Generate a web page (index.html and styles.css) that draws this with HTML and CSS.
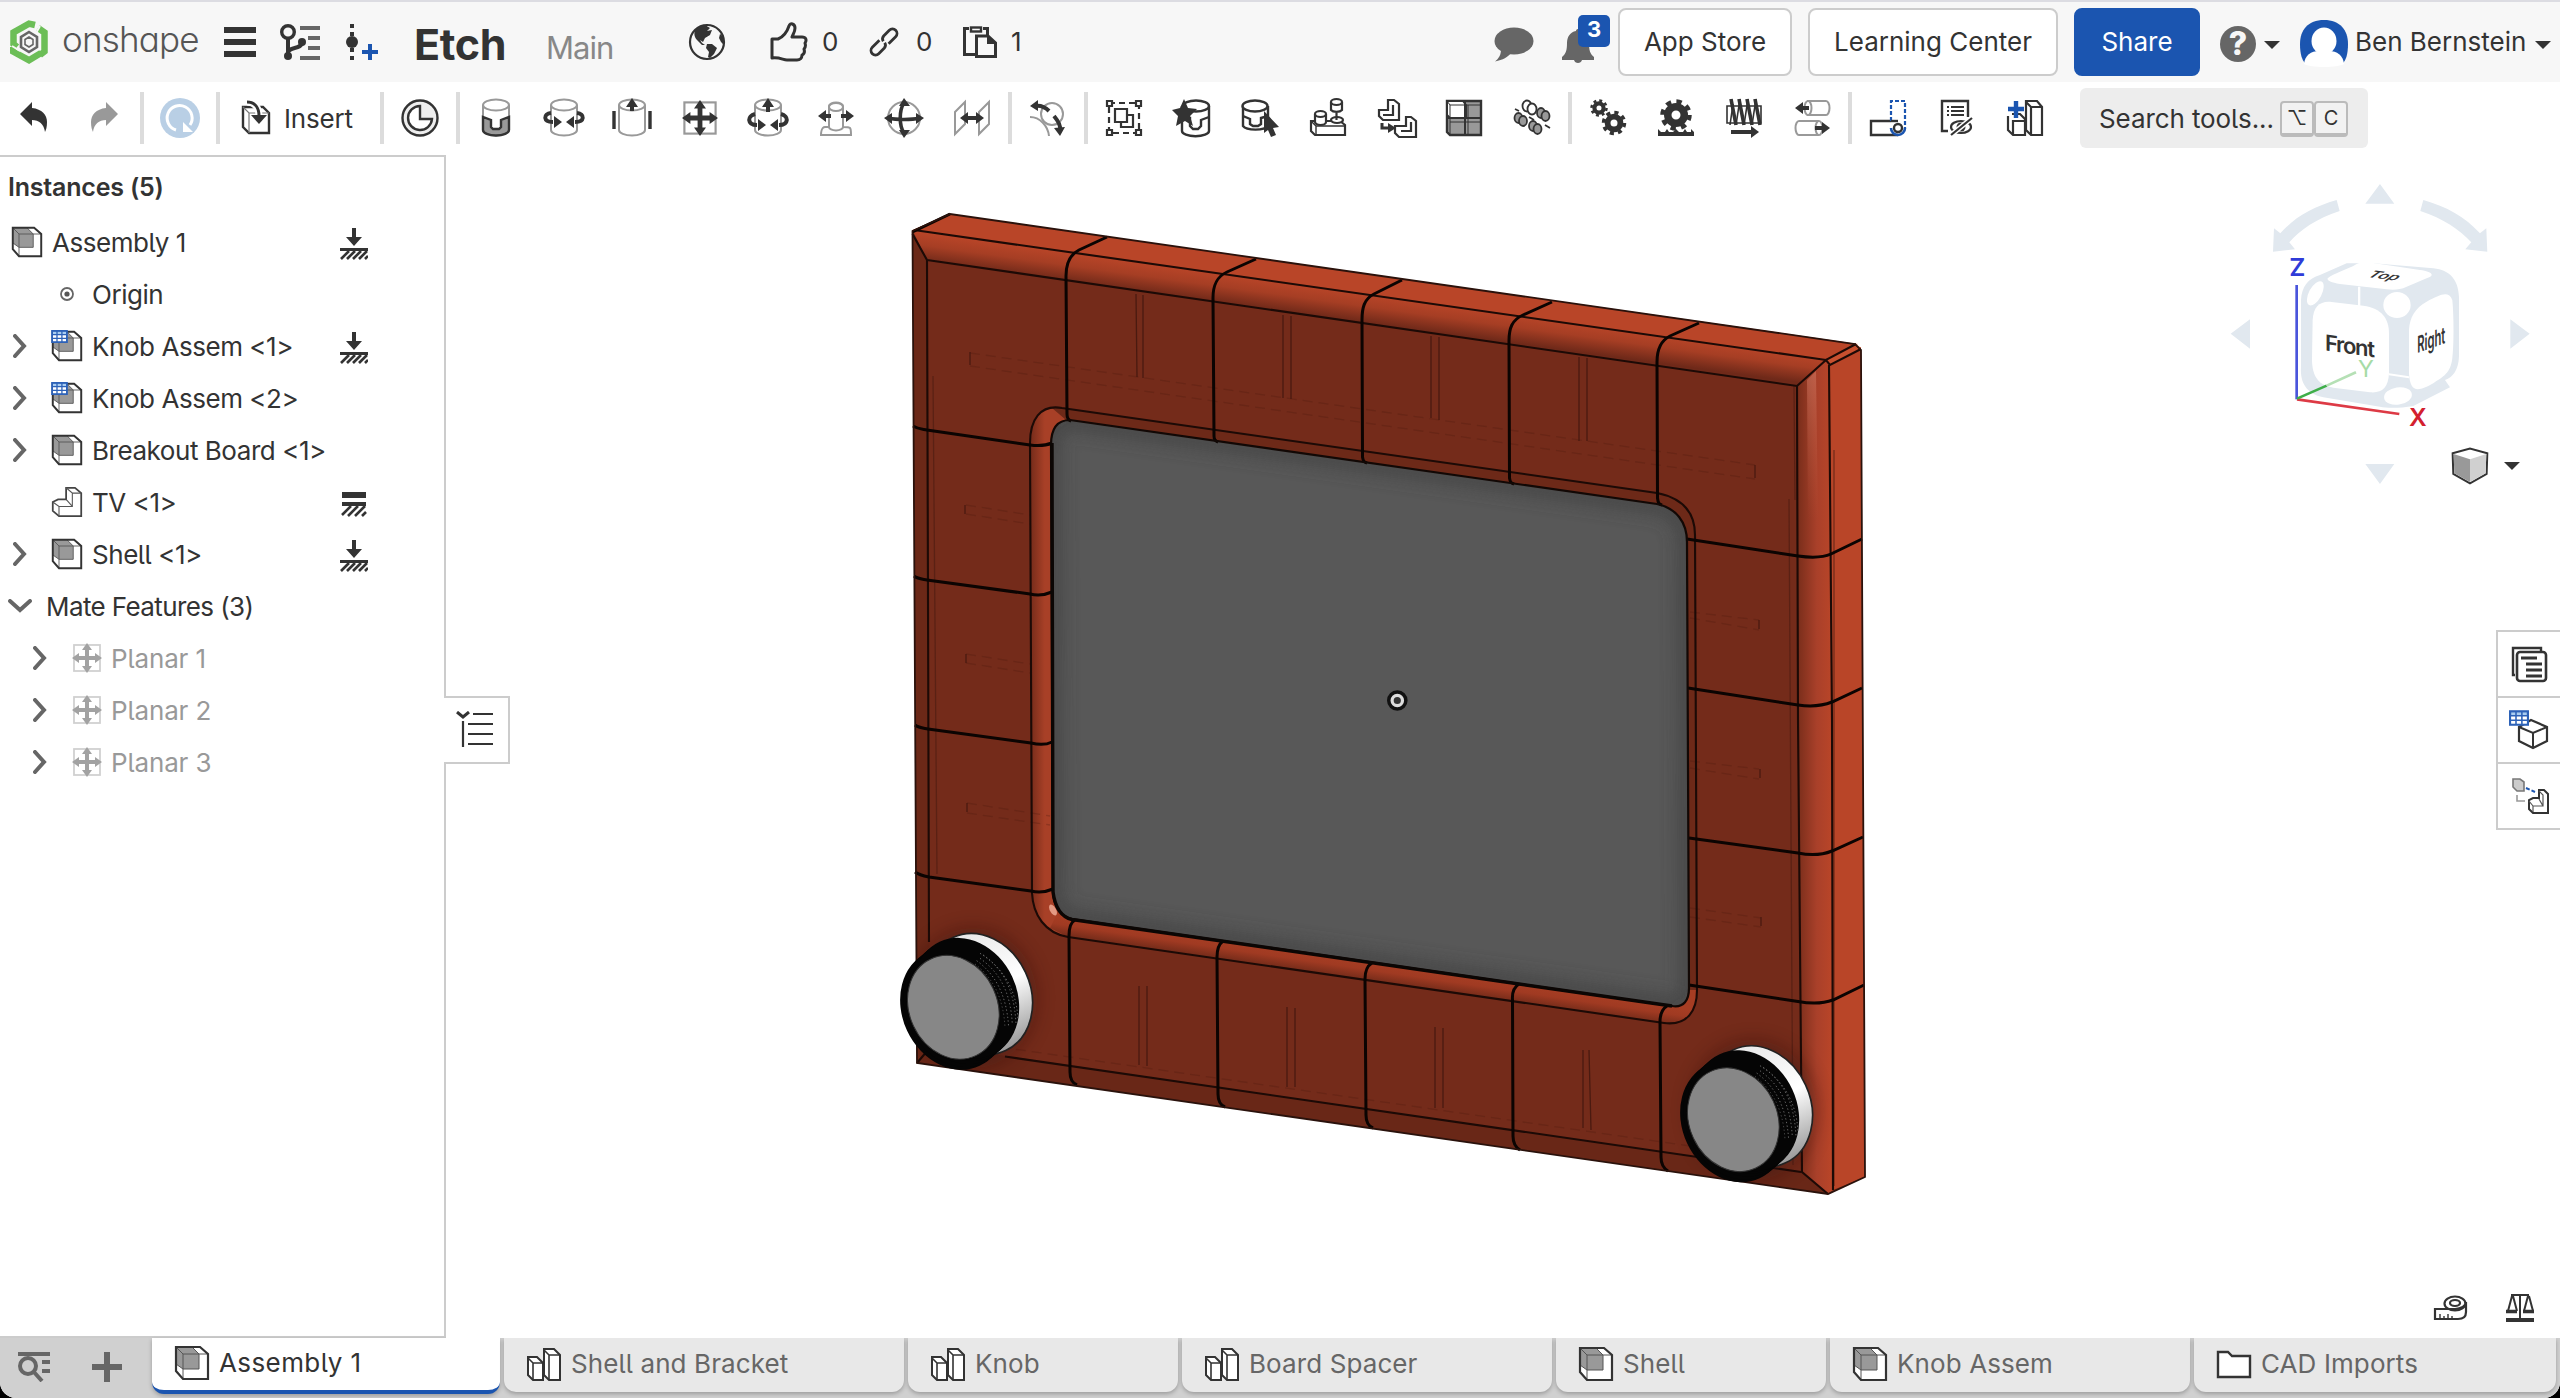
FILE: index.html
```
<!DOCTYPE html>
<html lang="en">
<head>
<meta charset="utf-8">
<title>Etch - Assembly 1</title>
<link rel="stylesheet" href="styles.css">
</head>
<body>
<svg class="defs" width="0" height="0" aria-hidden="true">
  <defs>
    <symbol id="asm" viewBox="0 0 36 36">
      <path d="M2 2H26L34 9V34H9L2 26Z" fill="#fff"/>
      <path d="M2 2H18L25 9V24H9L2 19Z" fill="#999"/>
      <path d="M2 2L9 9H34M9 9V24H25V9L18 2M2 19L9 24V34M26 2L34 9" fill="none" stroke="#555" stroke-width="1"/>
      <path class="edge" d="M2 2H26L34 9V34H9L2 26Z" fill="none" stroke="#333" stroke-width="2.2"/>
    </symbol>
    <symbol id="part" viewBox="0 0 36 36">
      <path d="M17 2H27L34 8V34H9L2 28V18L8 15H17Z" fill="#fff" stroke="#444" stroke-width="2"/>
      <path d="M2 18L9 23H24V8L17 2M24 8H34M9 23V34M24 23L17 15" fill="none" stroke="#555" stroke-width="1.2"/>
    </symbol>
    <symbol id="studio" viewBox="0 0 36 36">
      <path d="M18 3H28L34 9V34H23L18 29Z" fill="#fff" stroke="#333" stroke-width="2"/>
      <path d="M18 4L23 9H34M23 9V34" fill="none" stroke="#333" stroke-width="1.6"/>
      <path d="M2 11H11L17 17V34H7L2 29Z" fill="#fff" stroke="#333" stroke-width="2"/>
      <path d="M2 12L7 17H17M7 17V34" fill="none" stroke="#333" stroke-width="1.6"/>
    </symbol>
    <symbol id="fix" viewBox="0 0 28 32">
      <path d="M12 0H16V9H22L14 18L6 9H12Z" fill="#333"/>
      <path d="M0 20H28V23H0Z" fill="#333"/>
      <path d="M1 31L9 23M7 31L15 23M13 31L21 23M19 31L27 23M25 31L28 28" stroke="#333" stroke-width="2.6"/>
    </symbol>
    <symbol id="chev" viewBox="0 0 14 24"><path d="M2 2L11 12L2 22" fill="none" stroke="#666" stroke-width="4" stroke-linecap="round"/></symbol>
    <symbol id="planar" viewBox="-15 -15 30 30">
      <rect x="-13" y="-13" width="26" height="26" fill="none" stroke="#999" stroke-width="1.8"/>
      <path d="M-10 0H10M0 -10V10" stroke="#333" stroke-width="4"/>
      <path d="M-15 0L-8 -5V5ZM15 0L8 -5V5ZM0 -15L-5 -8H5ZM0 15L-5 8H5Z" fill="#333"/>
    </symbol>
    <symbol id="cyl" viewBox="-24 -24 48 48">
      <path d="M-13 -13V12A13 5.5 0 0 0 13 12V-13" fill="#fff" stroke="#999" stroke-width="2"/>
      <ellipse cx="0" cy="-13" rx="13" ry="5.5" fill="#fff" stroke="#999" stroke-width="2"/>
    </symbol>
    <symbol id="gear" viewBox="-24 -24 48 48">
      <circle r="11" fill="none" stroke="#333" stroke-width="10"/>
      <circle r="18" fill="none" stroke="#333" stroke-width="6" stroke-dasharray="7.07 7.07"/>
    </symbol>
    <symbol id="grid" viewBox="0 0 18 14">
      <rect x="1" y="1" width="16" height="12" fill="#a9cdf0" stroke="#2d62b8" stroke-width="2"/>
      <rect x="2" y="5" width="14" height="7" fill="#fff"/>
      <path d="M1 5H17M1 9H17M6.3 1V13M11.6 1V13" stroke="#2d62b8" stroke-width="1.4"/>
    </symbol>
  </defs>
</svg>

<div class="app">
  <header class="topbar">
    <svg class="logo" viewBox="0 0 38 44" width="38" height="44">
      <g fill="none" stroke="#6cbe57" stroke-width="6.5">
        <path d="M25 5L19 3.6L3.5 12.5V24L7 27"/>
        <path d="M28 8L34.5 12.5V31.5L30 35"/>
        <path d="M3 27V31.5L19 40.2L31 33"/>
      </g>
      <path d="M2 26L10 31M30 6L26 13" stroke="#f7f7f7" stroke-width="2"/>
      <path d="M19 12L27 17V27L19 32L11 27V17Z" fill="none" stroke="#666" stroke-width="2.6"/>
      <path d="M19 17L23 19.5V24.5L19 27L15 24.5V19.5Z" fill="none" stroke="#666" stroke-width="1.6"/>
    </svg>
    <span class="brand">onshape</span>
    <svg class="burger" viewBox="0 0 32 30" width="32" height="30"><path d="M0 3H32M0 15H32M0 27H32" stroke="#333" stroke-width="6"/></svg>
    <svg class="versions" viewBox="0 0 40 36" width="40" height="36">
      <path d="M20 4H40M28 14H40M28 24H40M20 34H40" stroke="#666" stroke-width="4"/>
      <circle cx="8" cy="8" r="6.3" fill="none" stroke="#333" stroke-width="3.4"/>
      <path d="M8 14V32M8 29C8 22 22 26 22 18" fill="none" stroke="#333" stroke-width="4"/>
      <circle cx="22" cy="18" r="4" fill="#333"/><circle cx="8" cy="32" r="4" fill="#333"/>
    </svg>
    <svg class="newver" viewBox="0 0 32 36" width="32" height="36">
      <path d="M6 0V36" stroke="#333" stroke-width="4" stroke-dasharray="4 4"/>
      <circle cx="6" cy="18" r="6" fill="#333"/>
      <path d="M24 20V36M16 28H32" stroke="#1b55b0" stroke-width="4"/>
    </svg>
    <span class="doc">Etch</span>
    <span class="workspace">Main</span>
    <svg class="globe" viewBox="-19 -19 38 38" width="38" height="38">
      <circle r="17" fill="#f7f7f7" stroke="#333" stroke-width="2.2"/>
      <path d="M-12 -12C-9 -15 -6 -17 -2 -17L3 -14L0 -11L5 -12L3 -7L-2 -4L-4 0L-7 -2L-5 1L-2 3L-5 3L-10 -2C-13 -5 -13 -9 -12 -12ZM0 2L5 2L10 6L7 12L3 16L1 15L2 10L-1 6ZM13 -8L17 -5V3L14 0L12 -4Z" fill="#333"/>
    </svg>
    <svg class="thumb" viewBox="0 0 38 40" width="38" height="40"><path d="M2 17H8C13 15 17 10 19 4C20 0 25 2 25 6C25 10 23 12 22 15H32C36 15 37 18 35 21C36 24 35 26 34 27C35 30 34 32 32 33C32 36 30 38 27 38H17C13 38 10 35 2 36Z" fill="none" stroke="#333" stroke-width="3" stroke-linejoin="round"/></svg>
    <span class="count">0</span>
    <svg class="link" viewBox="-15 -15 30 30" width="30" height="30">
      <g fill="none" stroke="#333" stroke-width="2.8" transform="rotate(-45)">
        <path d="M-2 -4.5H-12A4.5 4.5 0 0 0 -12 4.5H-4A4.5 4.5 0 0 0 0 1"/>
        <path d="M2 4.5H12A4.5 4.5 0 0 0 12 -4.5H4A4.5 4.5 0 0 0 0 -1"/>
      </g>
    </svg>
    <span class="count c2">0</span>
    <svg class="clip" viewBox="0 0 34 32" width="34" height="32">
      <path d="M6 2.5H1.5V28.500H13M20 2.500H24.500V9" fill="none" stroke="#333" stroke-width="3"/>
      <rect x="8" y="1.500" width="10" height="4" fill="none" stroke="#333" stroke-width="2.400"/>
      <path d="M13.500 10H25L32.500 17V30.500H13.500Z" fill="#f7f7f7" stroke="#333" stroke-width="3"/>
      <path d="M24 9V18H33Z" fill="#333"/>
    </svg>
    <span class="count c3">1</span>

    <svg class="chat" viewBox="0 0 40 36" width="40" height="36"><ellipse cx="20" cy="14" rx="19.500" ry="13.500" fill="#666"/><path d="M7 22C7 28 5 31 1 34.500C9 33 14 30 17 26Z" fill="#666"/></svg>
    <div class="bell">
      <svg viewBox="0 0 32 34" width="32" height="34"><path d="M16 0C17.500 0 18 1 18 2C24 3 27 8 27 14C27 21 28 25 32 28V31H20C19 35 13 35 12 31H0V28C4 25 5 21 5 14C5 8 8 3 14 2C14 1 14.500 0 16 0Z" fill="#666"/></svg>
      <span class="badge">3</span>
    </div>
    <a class="btn appstore">App Store</a>
    <a class="btn learning">Learning Center</a>
    <a class="btn share">Share</a>
    <div class="help"><span>?</span></div>
    <i class="caret"></i>
    <svg class="avatar" viewBox="0 0 48 48" width="48" height="48">
      <path d="M24 0C40 0 48 10 48 24C48 34 46 40 43 43H5C2 40 0 34 0 24C0 10 8 0 24 0Z" fill="#1b55b0"/>
      <ellipse cx="24" cy="21" rx="12.500" ry="13.500" fill="#fff"/>
      <path d="M4 44C5 35 11 31 19 31H29C37 31 43 35 44 44C38 48 10 48 4 44Z" fill="#fff"/>
    </svg>
    <span class="user">Ben Bernstein</span>
    <i class="caret c-user"></i>
  </header>

  <nav class="toolbar">
    <div class="tool"><svg viewBox="-22 -24 48 48"><path d="M-14 -4L-2 -16V-10C8 -9 13 -3 13 4C13 9 12 12 11 14C10 6 5 2 -2 2V8Z" fill="#333"/></svg></div>
    <div class="tool"><svg viewBox="-24 -24 48 48"><path d="M14 -4L2 -16V-10C-8 -9 -13 -3 -13 4C-13 9 -12 12 -11 14C-10 6 -5 2 2 2V8Z" fill="#999"/></svg></div>
    <i class="sep"></i>
    <div class="tool"><svg viewBox="-24 -24 48 48"><circle r="20" fill="#b9cfe5"/><path d="M-4 12A12.500 12.500 0 1 1 10 7" fill="none" stroke="#fff" stroke-width="3"/><circle r="9" fill="#b9cfe5"/><path d="M3 4V14H13Z" fill="#fff"/></svg></div>
    <i class="sep"></i>
    <div class="tool insert"><svg viewBox="-24 -24 48 48">
      <path d="M-13 -11H7L13 -5V15H-7L-13 9Z" fill="#fff" stroke="#333" stroke-width="2.400"/><path d="M-13 -11L-7 -5H13M-7 -5V15" fill="none" stroke="#777" stroke-width="1.200"/>
      <path d="M-9 -16C-1 -16 3 -10 3 -2" fill="none" stroke="#fff" stroke-width="7"/><path d="M-9 -16C-1 -16 3 -10 3 -2" fill="none" stroke="#333" stroke-width="3"/><path d="M-5 -3H11L3 6Z" fill="#333"/></svg><span>Insert</span></div>
    <i class="sep"></i>
    <div class="tool"><svg viewBox="-24 -24 48 48"><circle r="17.500" fill="#eee" stroke="#333" stroke-width="2.400"/><path d="M0 -12A12 12 0 1 0 12 1H0Z" fill="#fff" stroke="#333" stroke-width="2.400"/></svg></div>
    <i class="sep"></i>
    <div class="tool"><svg viewBox="-24 -24 48 48"><use href="#cyl" x="-24" y="-24" width="48" height="48"/><path d="M-13 -1V12A13 5.500 0 0 0 13 12V-1L5 2V9L3 11H-3L-5 9V2Z" fill="#999" stroke="#333" stroke-width="2.400"/></svg></div>
    <div class="tool"><svg viewBox="-24 -24 48 48"><use href="#cyl" x="-24" y="-24" width="48" height="48"/><path d="M-13 -5C-21 -4 -21 4 -11 4M13 -5C21 -4 21 4 11 4" fill="none" stroke="#333" stroke-width="4"/><path d="M-2 4L-10 -2V10ZM2 4L10 -2V10Z" fill="#333"/></svg></div>
    <div class="tool"><svg viewBox="-24 -24 48 48"><use href="#cyl" x="-24" y="-24" width="48" height="48"/><path d="M-18 -7V11M18 -7V11" stroke="#333" stroke-width="3.400"/><path d="M0 -7V-14" stroke="#333" stroke-width="4"/><path d="M0 -20L-6 -11H6Z" fill="#333"/></svg></div>
    <div class="tool"><svg viewBox="-24 -24 48 48"><use href="#planar" x="-18" y="-18" width="36" height="36"/></svg></div>
    <div class="tool"><svg viewBox="-24 -24 48 48"><use href="#cyl" x="-24" y="-24" width="48" height="48"/><path d="M-13 -4C-21 -2 -21 7 -11 7M13 -4C21 -2 21 7 11 7" fill="none" stroke="#333" stroke-width="4"/><path d="M-2 7L-10 1V13ZM2 7L10 1V13Z" fill="#333"/><path d="M0 -6V-13" stroke="#333" stroke-width="4"/><path d="M0 -20L-6 -11H6Z" fill="#333"/></svg></div>
    <div class="tool"><svg viewBox="-24 -24 48 48"><path d="M-7 9H-11C-15 9 -15 17 -15 17H15C15 9 15 9 7 9V-12A7 3.500 0 0 0 -7 -12Z" fill="#fff" stroke="#999" stroke-width="2"/><ellipse cy="-11" rx="7" ry="4" fill="#fff" stroke="#999" stroke-width="2"/><path d="M-7 9A7 3.500 0 0 0 7 9" fill="none" stroke="#999" stroke-width="2"/><path d="M-12 -2H-5M12 -2H5" stroke="#333" stroke-width="4"/><path d="M-18 -2L-10 -8V4ZM18 -2L10 -8V4Z" fill="#333"/></svg></div>
    <div class="tool"><svg viewBox="-24 -24 48 48"><circle r="16" fill="#fff" stroke="#999" stroke-width="2"/><path d="M-15 0C-8 2 8 2 15 0M0 -15C-5 -8 -5 8 0 15" fill="none" stroke="#333" stroke-width="3.600"/><path d="M-20 0L-12 -5V6ZM20 0L12 -5V6ZM0 -20L-5 -12H6ZM0 20L-5 12H6Z" fill="#333"/></svg></div>
    <div class="tool"><svg viewBox="-24 -24 48 48"><path d="M-17 16V-6L-7 -16V6ZM7 16V-6L17 -16V6Z" fill="#fff" stroke="#999" stroke-width="2"/><path d="M-7 0H7" stroke="#333" stroke-width="4"/><path d="M-12 0L-4 -6V6ZM12 0L4 -6V6Z" fill="#333"/></svg></div>
    <i class="sep"></i>
    <div class="tool"><svg viewBox="-24 -24 48 48"><circle cx="4" cy="-4" r="11" fill="#fff" stroke="#999" stroke-width="2"/><path d="M-18 -1C-8 -1 0 8 1 18" fill="none" stroke="#999" stroke-width="2"/><path d="M-13 -12C-7 -13 -2 -10 1 -7M6 -2C11 4 13 8 12 12" fill="none" stroke="#333" stroke-width="4"/><path d="M-18 -12L-10 -18V-7ZM12 18L6 10L17 9Z" fill="#333"/></svg></div>
    <i class="sep"></i>
    <div class="tool"><svg viewBox="-24 -24 48 48"><g fill="#fff" stroke="#333" stroke-width="2.200"><path d="M-15 -15H15V15H-15Z" stroke-dasharray="6 4"/><path d="M-17 -17h5v5h-5zM12 -17h5v5h-5zM-17 12h5v5h-5zM12 12h5v5h-5z"/><path d="M-3 -3H9V9H-3Z"/><path d="M-9 -9H3V4H-9Z"/></g></svg></div>
    <div class="tool"><svg viewBox="-24 -24 48 48"><path d="M-10 -12V13A13 5 0 0 0 17 13V-12" fill="#fff" stroke="#333" stroke-width="2.400"/><ellipse cx="4" cy="-12" rx="13" ry="5.500" fill="#fff" stroke="#333" stroke-width="2.400"/><path d="M-10 0H-2V8L1 11H6L9 8V2L17 -1" fill="none" stroke="#333" stroke-width="2.400"/><path d="M-8 -19L-4 -10L5 -9L-2 -2L1 8L-7 3L-16 8L-14 -2L-20 -8L-12 -10Z" fill="#333"/></svg></div>
    <div class="tool"><svg viewBox="-24 -24 48 48"><path d="M-17 -12V8A13 5 0 0 0 8 8V-12" fill="#fff" stroke="#333" stroke-width="2.400"/><ellipse cx="-5" cy="-12" rx="12.500" ry="5.500" fill="#fff" stroke="#333" stroke-width="2.400"/><path d="M-17 -2L-10 1V6L-7 8H-2L1 6V0L8 -2" fill="none" stroke="#333" stroke-width="2.400"/><path d="M4 -7L19 9L13 10L16 17L11 19L8 12L4 15Z" fill="#333"/></svg></div>
    <div class="tool"><svg viewBox="-24 -24 48 48"><g fill="#fff" stroke="#333" stroke-width="2.200"><path d="M-17 3H12L17 7V17H-13L-17 13Z"/><path d="M-17 3L-12 8H17M-12 8V17" fill="none" stroke-width="1.400"/><path d="M-13 -4V4A5.500 3 0 0 0 -2 4V-4"/><ellipse cx="-7.500" cy="-4" rx="5.500" ry="3"/><ellipse cx="9" cy="2" rx="6" ry="3"/><path d="M3 -16V-8A6 3 0 0 0 14 -8V-16"/><ellipse cx="8.500" cy="-16" rx="5.500" ry="3"/><path d="M8.500 -5V2"/></g></svg></div>
    <div class="tool"><svg viewBox="-24 -24 48 48"><g fill="#fff" stroke="#333" stroke-width="2.200"><path d="M-8 -18H-2L3 -14V2H-13L-17 -2V-8H-8Z"/><path d="M-3 -13V-3H-13" fill="none"/><path d="M10 -1H15L20 3V19H3L-1 15V8H10Z"/><path d="M15 4V13H5" fill="none"/><path d="M-14 5V10H-6" fill="none" stroke-width="3"/></g><path d="M-8 5L0 10L-8 15Z" fill="#333"/></svg></div>
    <div class="tool"><svg viewBox="-24 -24 48 48"><path d="M-17 -17H17V17H-14L-17 14Z" fill="#999" stroke="#333" stroke-width="2.400"/><path d="M-17 -17H-1L2 -13V0H-14L-17 -3Z" fill="#fff" stroke="#333" stroke-width="2"/><path d="M1 -17V17M-17 0H17" fill="none" stroke="#333" stroke-width="2"/><path d="M-17 -17L-14 -13H17M-14 -13V17M4 -13V17M-14 4H17" fill="none" stroke="#333" stroke-width="1"/></svg></div>
    <div class="tool"><svg viewBox="-24 -24 48 48"><g stroke="#333" stroke-width="1.800" fill="#999"><g fill="#fff"><ellipse cx="-5" cy="-12" rx="4.500" ry="5.500"/><ellipse cx="0" cy="-9" rx="4.500" ry="5.500"/></g><ellipse cx="9" cy="-5" rx="4" ry="5"/><ellipse cx="13.500" cy="-2" rx="4" ry="5"/><ellipse cx="-13.500" cy="0" rx="4" ry="5"/><ellipse cx="-9" cy="3" rx="4" ry="5"/><ellipse cx="1" cy="8" rx="4" ry="5"/><ellipse cx="5.500" cy="11" rx="4" ry="5"/><path d="M-17 -9L-13 -7M-3 -1L2 2M13 7L18 10"/></g></svg></div>
    <i class="sep"></i>
    <div class="tool"><svg viewBox="-24 -24 48 48"><use href="#gear" x="-19" y="-20" width="20" height="20"/><use href="#gear" x="-8" y="-9" width="28" height="28"/></svg></div>
    <div class="tool"><svg viewBox="-24 -24 48 48"><use href="#gear" x="-18" y="-21" width="36" height="36"/><path d="M-18 18H18V14L15 11V14H11L9 11L7 14H3L0 11L-3 14H-7L-9 11L-11 14H-15L-18 11Z" fill="#333"/></svg></div>
    <div class="tool"><svg viewBox="-24 -24 48 48"><path d="M-17 -12H17V5H-17Z" fill="none" stroke="#333" stroke-width="1.600"/><path d="M-13 -19L-8 7M-5 -19L0 7M3 -19L8 7M11 -19L16 7" stroke="#333" stroke-width="3.600"/><path d="M-14 7L-11 -14M-8 7L-4 -19M0 7L4 -19M8 7L12 -19" stroke="#333" stroke-width="1.600"/><path d="M-13 14H8" stroke="#333" stroke-width="4"/><path d="M15 14L7 8V20Z" fill="#333"/></svg></div>
    <div class="tool"><svg viewBox="-24 -24 48 48"><g fill="#fff" stroke="#999" stroke-width="2"><path d="M-5 -17H14A3.500 7 0 0 1 14 -3H-5"/><ellipse cx="-4" cy="-10" rx="3.500" ry="7"/><path d="M7 3H-13A3.500 7 0 0 0 -13 17H7"/><ellipse cx="7" cy="10" rx="3.500" ry="7"/></g><path d="M-10 -10H-3M3 10H12" stroke="#333" stroke-width="4"/><path d="M-17 -10L-9 -16V-4ZM18 10L10 4V16Z" fill="#333"/></svg></div>
    <i class="sep"></i>
    <div class="tool"><svg viewBox="-24 -24 48 48"><path d="M3 3H-17V17H10" fill="none" stroke="#333" stroke-width="2.400"/><path d="M3 3V-17H17V10" fill="none" stroke="#1b55b0" stroke-width="2.200" stroke-dasharray="4 2"/><path d="M3 3H10" stroke="#333" stroke-width="2.400"/><path d="M3 10A7 7 0 0 0 17 10" fill="none" stroke="#1b55b0" stroke-width="2.600"/><circle cx="10" cy="10" r="4" fill="#fff" stroke="#333" stroke-width="2.400"/></svg></div>
    <div class="tool"><svg viewBox="-24 -24 48 48"><path d="M-8 13H-14V-17H12V-1" fill="none" stroke="#333" stroke-width="2.400"/><path d="M-9 -11H-7M-5 -11H8M-9 -7H-7M-5 -7H8M-9 -3H-7M-5 -3H8" stroke="#333" stroke-width="1.800"/><ellipse cx="5" cy="9" rx="10" ry="6" fill="#fff" stroke="#333" stroke-width="2.200"/><circle cx="5" cy="9" r="4.500" fill="#333"/><path d="M-5 17L16 0" stroke="#fff" stroke-width="5"/><path d="M-5 17L16 0" stroke="#333" stroke-width="2.200"/></svg></div>
    <div class="tool"><svg viewBox="-24 -24 48 48"><g fill="#fff" stroke="#333" stroke-width="2.200"><path d="M2 -17H13L18 -11V17H7L2 12Z"/><path d="M2 -16L7 -11H18M7 -11V17" fill="none"/><path d="M-16 -2V12L-11 17H1V1L-4 -4H-12"/><path d="M-11 3H1M-11 2V17" fill="none"/></g><path d="M-16 -9H0M-8 -17V0" stroke="#1b55b0" stroke-width="4.400"/></svg></div>
    <div class="search"><span>Search tools...</span><kbd>⌥</kbd><kbd>C</kbd></div>
  </nav>

  <main class="work">
    <aside class="tree">
      <h2>Instances (5)</h2>
      <div class="row root"><svg class="ico"><use href="#asm"/></svg><span>Assembly 1</span><svg class="state"><use href="#fix"/></svg></div>
      <div class="row"><i class="chev"></i><svg class="ico" viewBox="-16 -16 32 32"><circle r="6" fill="none" stroke="#666" stroke-width="1.800"/><circle r="2.600" fill="#555"/></svg><span>Origin</span></div>
      <div class="row"><svg class="chev"><use href="#chev"/></svg><svg class="ico" viewBox="0 0 32 32"><use href="#asm" width="32" height="32"/><use href="#grid" x="0" y="0" width="17" height="13"/></svg><span>Knob Assem &lt;1&gt;</span><svg class="state"><use href="#fix"/></svg></div>
      <div class="row"><svg class="chev"><use href="#chev"/></svg><svg class="ico" viewBox="0 0 32 32"><use href="#asm" width="32" height="32"/><use href="#grid" x="0" y="0" width="17" height="13"/></svg><span>Knob Assem &lt;2&gt;</span></div>
      <div class="row"><svg class="chev"><use href="#chev"/></svg><svg class="ico"><use href="#asm"/></svg><span>Breakout Board &lt;1&gt;</span></div>
      <div class="row"><i class="chev"></i><svg class="ico"><use href="#part"/></svg><span>TV &lt;1&gt;</span><svg class="state" viewBox="0 0 28 32"><path d="M2 4H26V10H2ZM2 14H26V18H2Z" fill="#333"/><path d="M2 27L11 18M8 28L18 18M15 28L25 18M22 28L26 24" stroke="#333" stroke-width="2.600"/></svg></div>
      <div class="row"><svg class="chev"><use href="#chev"/></svg><svg class="ico"><use href="#asm"/></svg><span>Shell &lt;1&gt;</span><svg class="state"><use href="#fix"/></svg></div>
      <div class="row group"><svg class="down" viewBox="0 0 24 14"><path d="M2 2L12 11L22 2" fill="none" stroke="#666" stroke-width="4" stroke-linecap="round"/></svg><span>Mate Features (3)</span></div>
      <div class="row mate"><svg class="chev"><use href="#chev"/></svg><svg class="ico"><use href="#planar"/></svg><span>Planar 1</span></div>
      <div class="row mate"><svg class="chev"><use href="#chev"/></svg><svg class="ico"><use href="#planar"/></svg><span>Planar 2</span></div>
      <div class="row mate"><svg class="chev"><use href="#chev"/></svg><svg class="ico"><use href="#planar"/></svg><span>Planar 3</span></div>
    </aside>

    <section class="viewport">
      <svg class="scene" viewBox="446 155 2114 1183">
        <defs>
          <linearGradient id="gTop" gradientUnits="userSpaceOnUse" x1="1300" y1="284" x2="1296" y2="313"><stop offset="0" stop-color="#b94528"/><stop offset=".45" stop-color="#a63e24"/><stop offset="1" stop-color="#6f2919"/></linearGradient>
          <linearGradient id="gRight" gradientUnits="userSpaceOnUse" x1="1798" y1="0" x2="1832" y2="0"><stop offset="0" stop-color="#7a2e1b"/><stop offset=".55" stop-color="#a9402a"/><stop offset="1" stop-color="#b94528"/></linearGradient>
          <linearGradient id="gShine" x1="0" y1="0" x2="0" y2="1"><stop offset="0" stop-color="#d8806a" stop-opacity=".5"/><stop offset="1" stop-color="#c05a3c" stop-opacity="0"/></linearGradient>
          <linearGradient id="gRimL" gradientUnits="userSpaceOnUse" x1="1030" y1="0" x2="1051" y2="0"><stop offset="0" stop-color="#742b1a"/><stop offset=".7" stop-color="#a84027"/><stop offset="1" stop-color="#a84027"/></linearGradient>
          <linearGradient id="gRimB" gradientUnits="userSpaceOnUse" x1="1370" y1="963" x2="1367.500" y2="980"><stop offset="0" stop-color="#a63d23"/><stop offset=".4" stop-color="#a03a22"/><stop offset="1" stop-color="#762c1a"/></linearGradient>
          <linearGradient id="gWhite" x1="0" y1="0" x2="0" y2="1"><stop offset="0" stop-color="#e8e8e8"/><stop offset=".5" stop-color="#fff"/><stop offset="1" stop-color="#9a9a9a"/></linearGradient>
          <filter id="soft" x="-10%" y="-10%" width="120%" height="120%"><feGaussianBlur stdDeviation="9"/></filter>
          <filter id="halo" x="-40%" y="-40%" width="180%" height="180%"><feGaussianBlur stdDeviation="9"/></filter>
          <clipPath id="screenClip"><path d="M1051 445C1051 430 1056 420 1070 420L1657 504C1676 508 1687 522 1687 542L1689 988C1689 1000 1684 1008 1672 1006L1072 919C1060 916 1053 905 1053 890Z"/></clipPath>
          <clipPath id="bodyClip"><path d="M912 232L950 214L1860 345L1865 1177L1828 1194L917 1063Z"/></clipPath>
        </defs>

        <path d="M912.500 231L950 214L1855 344L1861 350L1865 1177L1828 1194L917 1063Z" fill="#742b1a"/>
        <path d="M912.500 230L950 214L1858 344L1826 360Z" fill="#b94528"/>
        <path d="M912.500 230L1826 360L1797 386L927 260Z" fill="url(#gTop)"/>
        <path d="M1826 360L1830 366L1833 1190L1828 1194L1801 1172L1797 386Z" fill="url(#gRight)"/>
        <path d="M1807 380L1816 371L1818 520H1808Z" fill="url(#gShine)"/>
        <path d="M1829 365L1861 347L1865 1177L1833 1190Z" fill="#b94528"/>
        <path d="M1826 360L1856 344L1861 348L1830 366Z" fill="#c9502f"/>
        <path d="M912.500 232L927 260L930 1050L917 1063Z" fill="#6b2817"/>
        <path d="M917 1063L930 1045L1801 1172L1828 1194Z" fill="#692717"/>

        <path d="M1030 443C1030 420 1040 404 1062 408L1657 493C1682 498 1695 512 1696 535L1697 990C1697 1010 1688 1026 1664 1023L1068 937C1045 933 1033 915 1032 893Z" fill="#6d2918"/>
        <path d="M1030 443C1030 425 1038 410 1052 408L1066 420C1056 421 1051 430 1051 445L1053 892C1054 905 1060 915 1072 919L1068 937C1045 933 1033 915 1032 893Z" fill="url(#gRimL)"/>
        <path d="M1058 912L1072 919L1672 1006C1684 1006 1688 998 1689 990L1697 990C1697 1010 1688 1026 1664 1023L1068 937L1050 928Z" fill="url(#gRimB)"/>
        <ellipse cx="1053" cy="910" rx="3" ry="6" fill="#f2b09b" opacity=".8" transform="rotate(-30 1053 910)"/>

        <path d="M1051 445C1051 430 1056 420 1070 420L1657 504C1676 508 1687 522 1687 542L1689 988C1689 1000 1684 1008 1672 1006L1072 919C1060 916 1053 905 1053 890Z" fill="#585858"/>
        <g clip-path="url(#screenClip)"><path d="M1051 445C1051 430 1056 420 1070 420L1657 504C1676 508 1687 522 1687 542L1689 988C1689 1000 1684 1008 1672 1006L1072 919C1060 916 1053 905 1053 890Z" fill="none" stroke="#404040" stroke-width="18" opacity=".75" filter="url(#soft)"/></g>

        <g class="faint">
          <path d="M970 353L1755 465M970 366L1755 479M966 505L1030 515M966 514L1030 524M966 654L1030 664M966 663L1030 673M967 803L1050 816M967 813L1050 825M1690 612L1759 620M1690 618L1759 630M1690 761L1759 769M1690 768L1759 779M1690 908L1761 918M1690 917L1761 927M1000 1047L1690 1146" stroke-dasharray="10 6" opacity=".28"/>
          <path d="M970 352V365M1755 465V478M965 505V514M966 654V663M967 803V812M1759 620V629M1760 769V778M1761 917V926"/>
          <path d="M1136 294L1137 377M1143 295V378M1283 315V398M1291 316V399M1431 336V418M1439 337V420M1579 357V441M1587 358V441"/>
          <path d="M1139 986V1065M1147 986V1066M1287 1007V1087M1295 1008V1087M1435 1027V1108M1443 1028V1108M1583 1050V1128M1589 1050L1591 1130"/>
          <path d="M933 376L937 874M1789 499L1793 1165M1834 450V1186M1794 386L1795 500" opacity=".6"/>
        </g>

        <g class="thin">
          <path d="M914 230L1826 360L1856 344M927 260L1797 386L1826 360L1830 365L1861 349M927 260L929 942M912.500 234L927 260"/>
          <path d="M1797 386L1798 720L1802 1172L1828 1194M1829 365L1832 720L1833 1190M1005 1056.500L1801 1172M917 1063L928 1050"/>
          <path d="M1030 443C1030 420 1040 404 1062 408L1657 493C1682 498 1695 512 1695 535L1697 990C1697 1010 1688 1026 1664 1023L1068 937C1045 933 1033 915 1032 893Z"/>
        </g>
        <g class="bold">
          <path d="M1107 237L1079 250C1069 255 1066 264 1066 276L1067 414C1067 418 1068 420 1071 421"/>
          <path d="M1256 259L1227 272C1216 277 1213 286 1213 298L1214 436C1214 439 1215 441 1218 442"/>
          <path d="M1402 280L1374 294C1364 299 1362 308 1362 320L1362.500 457C1363 461 1364 462 1367 463"/>
          <path d="M1552 302L1523 315C1512 320 1509 328 1509 341L1509.500 478C1510 482 1511 483 1514 484"/>
          <path d="M1699 323L1670 336C1660 341 1657 350 1657 362L1657.500 498C1658 503 1659 504 1662 505"/>
          <path d="M913 426C918 429 922 429 927 430L1030 445C1038 446 1045 446 1052 443"/>
          <path d="M914 576C918 579 922 579 927 580L1030 594C1038 596 1045 595 1052 592"/>
          <path d="M915 725C919 728 923 728 928 729L1031 743C1039 745 1046 745 1052 742"/>
          <path d="M915 872C919 875 924 876 929 877L1031 891C1039 893 1046 892 1053 889"/>
          <path d="M1687 539L1798 556C1812 558 1822 558 1831 554L1862 539"/>
          <path d="M1688 688L1798 705C1812 707 1822 706 1832 702L1862 688"/>
          <path d="M1689 838L1798 853C1812 856 1822 855 1832 851L1863 837"/>
          <path d="M1689 985L1798 1001.500C1812 1004 1822 1004 1833 1000L1864 985"/>
          <path d="M1075 920C1071 922 1069 928 1069 936L1070 1072C1070 1079 1072 1083 1077 1085"/>
          <path d="M1223 941C1219 944 1217 949 1217 957L1218 1094C1218 1101 1220 1105 1225 1107"/>
          <path d="M1372 963C1367 966 1365 971 1365 979L1366 1115C1366 1122 1368 1126 1373 1128"/>
          <path d="M1519 984C1514 987 1512 993 1512.500 1000L1513 1136C1513 1143 1515 1147 1520 1150"/>
          <path d="M1667 1006C1662 1009 1660 1014 1660 1022L1661 1157C1661 1164 1663 1168 1668 1171"/>
          <path d="M912.500 232L950 214"/>
        </g>
        <path d="M1051 445C1051 430 1056 420 1070 420L1657 504C1676 508 1687 522 1687 542L1689 988C1689 1000 1684 1008 1672 1006L1072 919C1060 916 1053 905 1053 890Z" fill="none" stroke="#120805" stroke-width="2.200"/>
        <path d="M1052 443L1053 892C1055 907 1061 917 1072 919.500L1672 1006" fill="none" stroke="#0b0604" stroke-width="3.400"/>
        <path d="M912.500 231L950 214L1855 344L1861 350L1865 1177L1828 1194L917 1063Z" fill="none" stroke="#2a120c" stroke-width="1.800"/>

        <g clip-path="url(#bodyClip)"><ellipse cx="973" cy="998" rx="64" ry="70" fill="#2c0f08" opacity=".35" filter="url(#halo)"/><ellipse cx="1753" cy="1110" rx="64" ry="70" fill="#2c0f08" opacity=".35" filter="url(#halo)"/></g>
        <g id="knob" transform="translate(880 780) scale(.3333)">
          <g transform="translate(298 642) rotate(-25)"><ellipse rx="153" ry="187" fill="url(#gWhite)" stroke="#222" stroke-width="5"/></g>
          <g fill="#050505">
            <ellipse rx="153" ry="187" transform="translate(220 688) rotate(-25)"/>
            <ellipse rx="153" ry="187" transform="translate(230 680) rotate(-25)"/>
            <ellipse rx="153" ry="187" transform="translate(240 671) rotate(-25)"/>
            <ellipse rx="153" ry="187" transform="translate(250 662) rotate(-25)"/>
            <ellipse rx="153" ry="187" transform="translate(258 655) rotate(-25)"/>
          </g>
          <g fill="none" stroke="#666" stroke-width="3" stroke-dasharray="4 7">
            <path d="M310 525C365 565 402 620 408 730"/><path d="M300 535C355 575 392 630 397 735"/><path d="M290 542C342 580 380 640 386 742"/><path d="M300 520C365 560 410 625 414 720"/><path d="M285 552C332 588 370 645 375 742" stroke="#444"/>
          </g>
          <ellipse rx="132" ry="160" fill="#878787" stroke="#333" stroke-width="3" transform="translate(220 682) rotate(-25)"/>
        </g>
        <use href="#knob" x="780" y="112.400"/>

        <circle cx="1397.300" cy="700.500" r="7.800" fill="#111" stroke="#111" stroke-width="5"/><circle cx="1397.300" cy="700.500" r="5.200" fill="#333" stroke="#ddd" stroke-width="3.200"/>

        <g transform="translate(2200 160) scale(.3333)">
          <g fill="#e1e8ef">
            <path d="M540 72L583 131H496ZM540 972L583 912H496ZM92 521L150 478V566ZM989 521L931 478V566Z"/>
            <path d="M410 120L419 153C350 175 300 210 268 247L285 268L219 275L222 205L241 220C285 170 340 140 410 120Z"/>
            <path d="M670 120L661 153C730 175 780 210 814 247L796 268L862 275L859 205L840 220C795 170 740 140 670 120Z"/>
            <path d="M303 420C305 380 325 355 360 345L440 310H520L700 325C750 330 775 360 777 410V590C775 630 760 650 735 660L750 682L640 738C600 745 560 745 540 740L370 712C320 700 300 670 303 620Z"/>
          </g>
          <g fill="#fff">
            <path d="M383 355C400 340 440 330 470 312C480 306 500 306 515 308L660 330C700 335 705 348 680 355L620 380C600 390 580 390 560 388L420 372C395 368 380 362 383 355Z"/>
            <path d="M338 480C340 440 360 422 395 426L490 437C545 445 567 475 567 520V640C565 685 545 700 510 697L400 683C355 675 337 650 336 600Z"/>
            <path d="M627 510C630 470 645 445 680 425C720 405 745 390 757 420C762 470 762 560 757 595C752 640 730 650 700 670C655 695 630 700 627 640Z"/>
            <ellipse cx="591" cy="435" rx="41" ry="39"/><ellipse cx="594" cy="708" rx="42" ry="26" transform="rotate(-8 594 708)"/><ellipse cx="346" cy="400" rx="19" ry="40" transform="rotate(28 346 400)"/>
            <path d="M474 380H481V440H474ZM567 640L627 649V655L567 646Z"/>
          </g>
          <g fill="none" stroke-width="8"><path d="M290 375V718" stroke="#4a55dc"/><path d="M291 718L598 762" stroke="#dd3a45"/><path d="M291 716L380 677" stroke="#3fae49"/><path d="M380 677L468 637" stroke="#b5e0b5"/></g>
          <text x="268" y="347" class="ax" fill="#2f3bd8">Z</text>
          <text x="627" y="799" class="ax" fill="#d3202e">X</text>
          <text x="474" y="651" class="ax light" fill="#a6dba6">Y</text>
          <text class="face" transform="matrix(1 .14 0 1 375 571)" textLength="150">Front</text>
          <text class="face side" transform="matrix(1 -.35 0 1.15 652 579)" textLength="84" lengthAdjust="spacingAndGlyphs">Right</text>
          <text class="face top" transform="matrix(1 .14 -.7 .5 498 350)" textLength="88" lengthAdjust="spacingAndGlyphs">Top</text>
          <path d="M758 880L810 866L862 880L860 942L810 970L760 942Z" fill="#fff" stroke="#333" stroke-width="6"/>
          <path d="M761 882L810 898V966L763 940Z" fill="#999"/><path d="M859 882L810 898V966L857 940Z" fill="#d0d0d0"/>
          <path d="M912 906H960L936 930Z" fill="#333"/>
        </g>

        <g fill="none" stroke="#333" stroke-width="2.200">
          <path d="M2435 1309H2455C2461 1309 2466 1306 2466 1302V1312C2466 1317 2463 1319 2458 1319H2435Z"/>
          <ellipse cx="2455" cy="1303.500" rx="10.500" ry="7"/><ellipse cx="2455" cy="1303" rx="5" ry="3"/>
          <path d="M2440 1319V1314M2444 1319V1316M2448 1319V1314M2452 1319V1316" stroke-width="1.400"/>
          <path d="M2511 1295H2529M2520 1295V1319M2512 1296L2508 1311M2513 1296L2517 1311M2528 1296L2524 1311M2529 1296L2533 1311" stroke-width="2"/>
          <path d="M2506 1311.500H2517M2523 1311.500H2534" stroke-width="3.600"/><path d="M2506 1320H2534" stroke-width="4"/>
        </g>
      </svg>

      <button class="flyout"><svg viewBox="0 0 38 38" width="38" height="38"><path d="M17 3H37M12 13H37M12 23H37M12 33H37M7 10V36" stroke="#333" stroke-width="2.200"/><path d="M1 1L7 6L13 1" fill="none" stroke="#333" stroke-width="3"/></svg></button>
      <div class="rail">
        <button><svg viewBox="-20 -20 40 40"><path d="M-14 11H-16V-16H12V-13" fill="none" stroke="#333" stroke-width="2.400"/><rect x="-12" y="-12" width="29" height="29" rx="3" fill="#fff" stroke="#333" stroke-width="2.600"/><path d="M-8 -6H8M-3 0H13M-3 6H13M-3 12H13" stroke="#333" stroke-width="3"/></svg></button>
        <button><svg viewBox="-20 -20 40 40"><path d="M2 -10L18 -3V11L4 18L-10 11V-3Z" fill="#fff" stroke="#333" stroke-width="2.200"/><path d="M-10 -3L4 3L18 -3M4 3V18" fill="none" stroke="#333" stroke-width="2"/><use href="#grid" x="-20" y="-20" width="20" height="16"/></svg></button>
        <button><svg viewBox="-20 -20 40 40"><path d="M-16 -17H-9L-5 -14V-5H-12L-16 -9Z" fill="#ccc" stroke="#777" stroke-width="1.600"/><path d="M-12 -1V5H-4" fill="none" stroke="#999" stroke-width="1.600"/><path d="M-3 -8L6 -4" stroke="#1b55b0" stroke-width="2" stroke-dasharray="4 2"/><path d="M10 -6H15L19 -2V17H4L0 13V4L4 2H10Z" fill="#fff" stroke="#333" stroke-width="2"/><path d="M10 -5L14 -1V10H4L0 5M4 10V16M14 10L10 3" fill="none" stroke="#555" stroke-width="1.200"/></svg></button>
      </div>
    </section>
  </main>

  <footer class="tabs">
    <svg class="find" viewBox="0 0 32 30" width="32" height="30"><path d="M0 2H32M24 10H32M24 19H32" stroke="#666" stroke-width="4"/><circle cx="10" cy="14" r="8" fill="none" stroke="#666" stroke-width="4"/><path d="M15 19L24 29" stroke="#666" stroke-width="4"/></svg>
    <svg class="add" viewBox="0 0 30 30" width="30" height="30"><path d="M15 0V30M0 15H30" stroke="#666" stroke-width="6"/></svg>
    <div class="tab active t1"><svg><use href="#asm"/></svg><span>Assembly 1</span></div>
    <div class="tab t2"><svg><use href="#studio"/></svg><span>Shell and Bracket</span></div>
    <div class="tab t3"><svg><use href="#studio"/></svg><span>Knob</span></div>
    <div class="tab t4"><svg><use href="#studio"/></svg><span>Board Spacer</span></div>
    <div class="tab t5"><svg><use href="#asm"/></svg><span>Shell</span></div>
    <div class="tab t6"><svg><use href="#asm"/></svg><span>Knob Assem</span></div>
    <div class="tab t7"><svg viewBox="0 0 36 36"><path d="M2 31V6H12L16 10H34V31Z" fill="#fff" stroke="#333" stroke-width="2.400"/></svg><span>CAD Imports</span></div>
  </footer>
</div>
</body>
</html>
```
FILE: styles.css
```
* { box-sizing: border-box; }
html, body { margin: 0; padding: 0; }
body {
  width: 2560px;
  height: 1398px;
  background: #000;
  color: #333;
  font-family: Inter, "Open Sans", sans-serif;
  font-size: 26px;
  font-feature-settings: "cv05";
  overflow: hidden;
}
.defs { position: absolute; }
svg { display: block; flex: none; }
.app {
  width: 2560px;
  height: 1398px;
  display: flex;
  flex-direction: column;
  background: #fff;
  border-radius: 0 0 16px 16px;
  overflow: hidden;
}

/* Top bar */
.topbar {
  height: 82px;
  flex: none;
  display: flex;
  align-items: center;
  padding-left: 10px;
  background: #f7f7f7;
  border-top: 2px solid #dcdce2;
  white-space: nowrap;
}
.topbar > * { flex: none; }
.brand {
  width: 162px;
  margin-left: 14px;
  font-size: 35px;
  font-weight: 300;
  letter-spacing: -0.8px;
  color: #555;
  font-feature-settings: "cv11";
  line-height: 44px;
  margin-top: -6px;
}
.burger { margin-left: 0; }
.versions { margin-left: 24px; }
.newver { margin-left: 26px; }
.doc {
  width: 134px;
  margin-left: 36px;
  font-size: 43px;
  font-weight: 700;
  letter-spacing: -0.3px;
  line-height: 50px;
  margin-top: 4px;
}
.workspace {
  width: 142px;
  font-size: 31px;
  letter-spacing: -1px;
  color: #888;
  line-height: 40px;
  margin-top: 12px;
  margin-left: -2px;
}
.globe { margin-left: 0; }
.thumb { margin-left: 44px; }
.count { width: 17px; margin-left: 14px; margin-top: -1px; }
.link { margin-left: 30px; }
.c2 { margin-left: 17px; }
.clip { margin-left: 30px; }
.c3 { margin-left: 14px; }
.chat { margin-left: auto; margin-top: 6px; }
.bell { position: relative; margin: 8px 0 0 28px; }
.badge {
  position: absolute;
  left: 16px;
  top: -14px;
  width: 32px;
  height: 32px;
  border-radius: 5px;
  background: #1b55b0;
  color: #fff;
  font-size: 22px;
  font-weight: 700;
  line-height: 29px;
  text-align: center;
}
.btn {
  height: 68px;
  display: flex;
  align-items: center;
  justify-content: center;
  background: #fff;
  border: 2px solid #ccc;
  border-radius: 8px;
  padding-bottom: 1px;
}
.appstore { width: 174px; margin-left: 24px; }
.learning { width: 250px; margin-left: 16px; }
.share { width: 126px; margin-left: 16px; background: #1b55b0; border-color: #1b55b0; color: #fff; }
.help {
  width: 36px;
  height: 36px;
  margin: 4px 0 0 20px;
  border-radius: 50%;
  background: #666;
  color: #f7f7f7;
  font-size: 32px;
  font-weight: 800;
  line-height: 36px;
  text-align: center;
}
.caret {
  width: 0;
  height: 0;
  margin: 5px 0 0 8px;
  border: 8px solid transparent;
  border-top-color: #333;
  border-bottom: 0;
}
.avatar { margin: 4px 0 0 20px; }
.user { margin-left: 7px; width: 172px; margin-top: -1px; }
.c-user { margin-right: 9px; }

/* Tool strip */
.toolbar {
  height: 73px;
  flex: none;
  display: flex;
  align-items: center;
  padding-left: 2px;
  padding-bottom: 1px;
  background: #fff;
}
.tool {
  width: 68px;
  flex: none;
  display: flex;
  justify-content: center;
}
.tool svg { width: 48px; height: 48px; overflow: visible; }
.tool.insert { width: 156px; justify-content: flex-start; align-items: center; padding-left: 10px; }
.insert span { margin-left: 4px; letter-spacing: -0.2px; }
.sep { width: 4px; height: 52px; margin: 0 2px; flex: none; background: #dcdcdc; }
.search {
  width: 288px;
  height: 60px;
  margin-left: 22px;
  padding-left: 19px;
  display: flex;
  align-items: center;
  background: #ededed;
  border-radius: 6px;
  white-space: nowrap;
}
.search span { width: 181px; letter-spacing: -0.1px; }
kbd {
  width: 34px;
  height: 36px;
  font: 20px/30px Inter, "DejaVu Sans", sans-serif;
  text-align: center;
  border: 2px solid #bbb;
  border-bottom-width: 4px;
  border-radius: 4px;
  background: #f2f2f2;
  margin-top: 2px;
}

/* Work area */
.work { flex: 1; display: flex; min-height: 0; }
.tree {
  width: 446px;
  flex: none;
  border: 2px solid #ccc;
  border-left: 0;
}
.tree h2 {
  margin: 0;
  height: 59px;
  padding-left: 8px;
  font-size: 25px;
  font-weight: 600;
  line-height: 60px;
  letter-spacing: -0.2px;
}
.row {
  height: 52px;
  display: flex;
  align-items: center;
  padding-left: 13px;
  white-space: nowrap;
}
.row span { letter-spacing: -0.45px; }
.row .chev { width: 14px; height: 24px; flex: none; margin-right: 24px; }
.row .ico { width: 32px; height: 32px; margin-right: 9px; }
.row.root { padding-left: 11px; }
.row .state { width: 28px; height: 32px; margin: 3px 76px 0 auto; }
.row.group { padding-left: 8px; }
.row .down { width: 24px; height: 14px; margin-right: 14px; }
.row.group span { letter-spacing: -0.6px; }
.row.mate { padding-left: 33px; color: #999; }
.row.mate span { letter-spacing: -0.15px; }
.row.mate .chev { margin-right: 25px; }
.row.mate .ico { width: 30px; height: 30px; margin-right: 9px; opacity: .45; }

.viewport { flex: 1; position: relative; background: #fff; }
.scene { width: 2114px; height: 1183px; }
.faint { fill: none; stroke: #4a1a10; stroke-width: 1.3; }
.thin { fill: none; stroke: #1c0a06; stroke-width: 2.1; }
.bold { fill: none; stroke: #0b0402; stroke-width: 3; }
.ax { font-size: 74px; font-weight: 600; }
.ax.light { font-weight: 400; font-size: 70px; }
.face { font-size: 66px; font-weight: 600; fill: #333; }
.face.side { font-size: 60px; }
.face.top { font-size: 52px; }
button { padding: 0; background: #fff; border: 2px solid #ccc; display: flex; align-items: center; justify-content: center; }
.flyout { position: absolute; left: -2px; top: 541px; width: 66px; height: 68px; border-left: 0; padding-right: 2px; }
.rail { position: absolute; right: 0; top: 475px; width: 64px; }
.rail button { width: 66px; height: 68px; margin-bottom: -2px; }
.rail svg { width: 40px; height: 40px; }

/* Document tabs */
.tabs {
  height: 60px;
  flex: none;
  display: flex;
  align-items: flex-start;
  background: #d0d0d0;
}
.find { margin: 14px 0 0 18px; }
.add { margin: 14px 30px 0 42px; }
.tab {
  height: 54px;
  margin-right: 4px;
  padding-left: 22px;
  display: flex;
  flex: none;
  align-items: center;
  background: #e8e8e8;
  border-radius: 0 0 12px 12px;
  box-shadow: 0 2px 4px rgba(0, 0, 0, .25);
  color: #666;
  white-space: nowrap;
}
.tab svg { width: 36px; height: 36px; margin-right: 9px; margin-top: -2px; }
.tab span { margin-top: -3px; letter-spacing: 0.1px; }
.tab.active { background: #fff; color: #333; height: 56px; border-bottom: 4px solid #1b55b0; }
.tab.active span { letter-spacing: 0.4px; }
.t1 { width: 348px; }
.t2 { width: 400px; }
.t3 { width: 270px; }
.t4 { width: 370px; }
.t5 { width: 270px; }
.t6 { width: 360px; }
.t7 { width: 362px; }
```
